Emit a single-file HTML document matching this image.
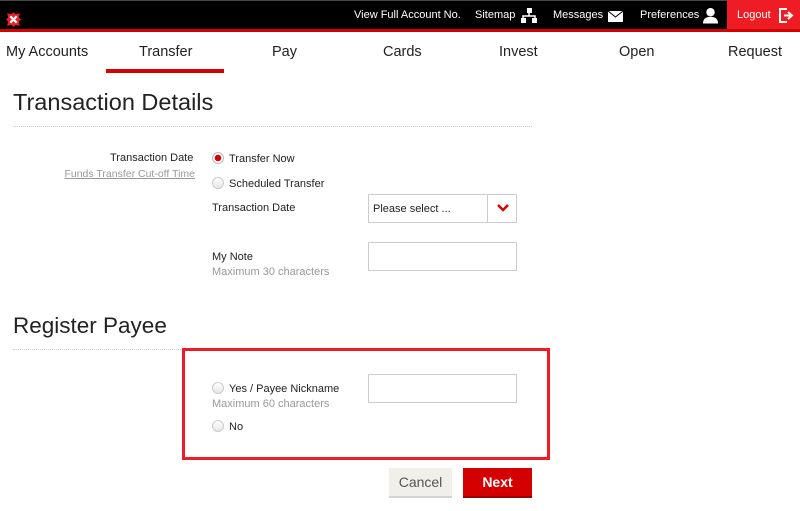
<!DOCTYPE html>
<html><head><meta charset="utf-8"><style>
*{margin:0;padding:0;box-sizing:border-box}
body{width:800px;height:511px;overflow:hidden;background:#fff;font-family:"Liberation Sans",sans-serif;color:#222;position:relative}
.a{position:absolute;white-space:nowrap}
.top{position:absolute;left:0;top:0;width:800px;height:29px;background:#000;border-top:1px solid #444}
.redl{position:absolute;left:0;top:29px;width:800px;height:3px;background:#d40000}
.tl{color:#fff;font-size:11px;top:9px}
.nav{font-size:14.5px;top:44px;color:#222}
.h{font-weight:normal;color:#222}
.dot{position:absolute;height:1px;border-top:1px dotted #ccc}
.s{font-size:11px;color:#222}
.g{font-size:11px;color:#999}
.radio{position:absolute;width:12px;height:12px;border-radius:50%;border:1px solid #ccc;background:linear-gradient(#fff,#e6e6e6)}
.inp{position:absolute;border:1px solid #ccc;background:#fff}
</style></head><body>
<div class="top"></div>
<div class="redl"></div>
<svg class="a" style="left:5px;top:11px" width="17" height="17" viewBox="0 0 16 16"><path d="M2 2 L6 3 L8 1 L10 3 L14 2 L13 6 L15 8 L13 10 L14 14 L10 13 L8 15 L6 13 L2 14 L3 10 L1 8 L3 6 Z" fill="#e8202a"/><path d="M5 5 L11 11 M11 5 L5 11" stroke="#fff" stroke-width="2"/></svg>
<div class="a tl" style="left:354px">View Full Account No.</div>
<div class="a tl" style="left:475px">Sitemap</div>
<svg class="a" style="left:521px;top:8px" width="16" height="16" viewBox="0 0 16 16" fill="#fff"><rect x="6" y="0" width="5" height="5"/><rect x="0" y="10" width="5" height="5"/><rect x="11" y="10" width="5" height="5"/><path d="M8 5V8M2 10V8H14V10" stroke="#fff" stroke-width="1.5" fill="none"/></svg>
<div class="a tl" style="left:553px">Messages</div>
<svg class="a" style="left:608px;top:11px" width="15" height="11" viewBox="0 0 15 11"><rect width="15" height="11" fill="#fff"/><path d="M0 0 L7.5 6 L15 0" stroke="#000" fill="none"/></svg>
<div class="a tl" style="left:640px">Preferences</div>
<svg class="a" style="left:703px;top:7px" width="15" height="17" viewBox="0 0 16 17" fill="#fff"><circle cx="8" cy="5" r="4.5"/><path d="M0 17 Q0 10 8 10 Q16 10 16 17Z"/></svg>
<div class="a" style="left:727px;top:0;width:73px;height:29px;background:#ee1c25"></div>
<div class="a tl" style="left:737px">Logout</div>
<svg class="a" style="left:779px;top:8px" width="15" height="15" viewBox="0 0 15 15"><path d="M8 1H1V14H8" stroke="#fff" stroke-width="2" fill="none"/><path d="M5 7.5H11M9 4L13 7.5L9 11" stroke="#fff" stroke-width="2" fill="none"/></svg>
<div class="a nav" style="left:6px">My Accounts</div>
<div class="a nav" style="left:139px">Transfer</div>
<div class="a" style="left:106px;top:69px;width:118px;height:4px;background:#d40000"></div>
<div class="a nav" style="left:272px">Pay</div>
<div class="a nav" style="left:383px">Cards</div>
<div class="a nav" style="left:499px">Invest</div>
<div class="a nav" style="left:619px">Open</div>
<div class="a nav" style="left:728px">Request</div>
<div class="a h" style="left:13px;top:89px;font-size:23.5px">Transaction Details</div>
<div class="dot" style="left:13px;top:126px;width:519px"></div>
<div class="a s" style="left:110px;top:152px">Transaction Date</div>
<div class="a g" style="right:605px;top:168px;font-size:10.5px;text-decoration:underline">Funds Transfer Cut-off Time</div>
<div class="radio" style="left:212px;top:152px;border-color:#bbb;background:radial-gradient(circle,#d40000 3px,#fff 3.5px)"></div>
<div class="a s" style="left:229px;top:153px">Transfer Now</div>
<div class="radio" style="left:212px;top:177px"></div>
<div class="a s" style="left:229px;top:178px">Scheduled Transfer</div>
<div class="a s" style="left:212px;top:202px">Transaction Date</div>
<div class="inp" style="left:368px;top:194px;width:149px;height:29px"></div>
<div class="a" style="left:487px;top:195px;width:1px;height:27px;background:#ccc"></div>
<div class="a s" style="left:373px;top:203px">Please select ...</div>
<svg class="a" style="left:497px;top:204px" width="12" height="8" viewBox="0 0 12 8"><path d="M1 1L6 6L11 1" stroke="#d40000" stroke-width="2.5" fill="none"/></svg>
<div class="a s" style="left:212px;top:251px">My Note</div>
<div class="a g" style="left:212px;top:266px">Maximum 30 characters</div>
<div class="inp" style="left:368px;top:242px;width:149px;height:29px"></div>
<div class="a h" style="left:13px;top:313px;font-size:22.5px">Register Payee</div>
<div class="dot" style="left:13px;top:349px;width:170px"></div>
<div class="a" style="left:182px;top:348px;width:368px;height:112px;border:3px solid #ee1c25"></div>
<div class="radio" style="left:212px;top:382px"></div>
<div class="a s" style="left:229px;top:383px">Yes / Payee Nickname</div>
<div class="a g" style="left:212px;top:398px">Maximum 60 characters</div>
<div class="radio" style="left:212px;top:420px"></div>
<div class="a s" style="left:229px;top:421px">No</div>
<div class="inp" style="left:368px;top:374px;width:149px;height:29px"></div>
<div class="a" style="left:389px;top:468px;width:63px;height:30px;background:#f1efea;border-bottom:2px solid #d8d5cf;color:#555;font-size:14px;text-align:center;line-height:28px">Cancel</div>
<div class="a" style="left:463px;top:468px;width:69px;height:30px;background:#d40000;border-bottom:2px solid #900;color:#fff;font-size:14px;font-weight:bold;text-align:center;line-height:28px">Next</div>
</body></html>
